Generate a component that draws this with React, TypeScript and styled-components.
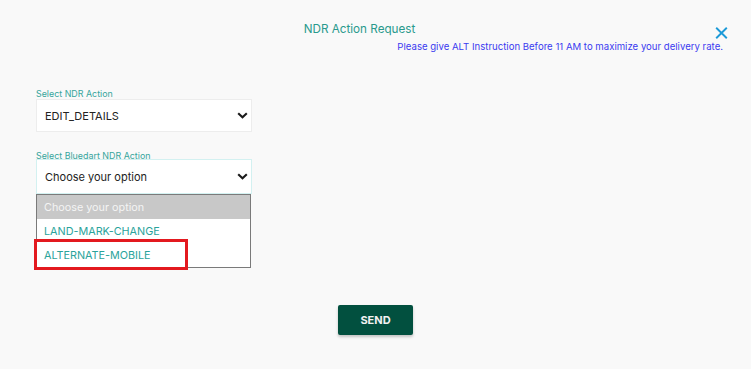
import React from "react";
import styled, { createGlobalStyle } from "styled-components";

const Global = createGlobalStyle`
  html, body { margin: 0; padding: 0; background: #f9f9f9; }
  body { font-family: Inter, "Noto Sans", Arial, sans-serif; }
  * { box-sizing: border-box; }
`;

const Page = styled.div`
  width: 751px;
  height: 369px;
  background: #f9f9f9;
  padding: 21px 23px 0 36px;
  display: flex;
  flex-direction: column;
`;

const TopRow = styled.div`
  display: flex;
  align-items: flex-start;
  height: 17px;
`;

const Title = styled.div`
  flex: 1;
  text-align: center;
  padding-right: 32px;
  padding-top: 1px;
  font-size: 11.7px;
  line-height: 14px;
  color: #2a9a8d;
`;

const Close = styled.button`
  border: 0;
  background: none;
  padding: 0;
  margin-top: 6px;
  width: 13px;
  height: 12px;
  display: flex;
  cursor: pointer;
`;

const Notice = styled.div`
  text-align: right;
  font-size: 9.6px;
  line-height: 12px;
  color: #3b3bf0;
  padding-right: 5px;
  margin-top: 3px;
`;

const Form = styled.div`
  width: 216px;
  margin-top: 35px;
  display: flex;
  flex-direction: column;
`;

const Label = styled.div<{ $top?: number; $bottom?: number }>`
  font-size: 8.9px;
  line-height: 11px;
  color: #36a59c;
  margin-top: ${(p) => p.$top ?? 0}px;
  margin-bottom: ${(p) => p.$bottom ?? 0}px;
`;

const SelectBox = styled.div<{ $focus?: boolean; $h: number }>`
  height: ${(p) => p.$h}px;
  background: #fff;
  border: 1px solid ${(p) => (p.$focus ? "#d3f1f1" : "#ededed")};
  display: flex;
  align-items: center;
  justify-content: space-between;
  padding: 0 3px 0 8px;
  font-size: 11px;
  color: #222;
`;

const ListBox = styled.div`
  width: 215px;
  border: 1px solid #7a7a7a;
  background: #fff;
  display: flex;
  flex-direction: column;
`;

const Option = styled.div<{ $placeholder?: boolean }>`
  position: relative;
  height: 24px;
  display: flex;
  align-items: center;
  padding-left: 7px;
  font-size: 10.8px;
  background: ${(p) => (p.$placeholder ? "#c8c8c8" : "#fff")};
  color: ${(p) => (p.$placeholder ? "#f4f4f4" : "#2aa39b")};
`;

const Highlight = styled.div`
  position: absolute;
  left: -3px;
  top: -4px;
  width: 154px;
  height: 31px;
  border: 3px solid #e3191f;
  pointer-events: none;
`;

const ButtonRow = styled.div`
  display: flex;
  justify-content: center;
  margin: 37px -23px 0 -36px;
`;

const SendButton = styled.button`
  width: 75px;
  height: 30px;
  background: #02503f;
  color: #f2f2f2;
  border: 0;
  border-radius: 2px;
  font-family: Inter, "Noto Sans", Arial, sans-serif;
  font-weight: 700;
  font-size: 11px;
  box-shadow: 0 2px 3px rgba(0, 0, 0, 0.22);
  cursor: pointer;
`;

const Chevron = () => (
  <svg width="11" height="7" viewBox="0 0 11 7">
    <path d="M1.2 1.2 L5.5 5.3 L9.8 1.2" fill="none" stroke="#1a1a1a" strokeWidth="2.1" />
  </svg>
);

export default function App() {
  return (
    <>
      <Global />
      <Page>
        <TopRow>
          <Title>NDR Action Request</Title>
          <Close aria-label="close">
            <svg width="13" height="12" viewBox="0 0 13 12">
              <path d="M1.2 0.8 L11.8 11.2 M11.8 0.8 L1.2 11.2" stroke="#1c9ad8" strokeWidth="1.9" />
            </svg>
          </Close>
        </TopRow>
        <Notice>Please give ALT Instruction Before 11 AM to maximize your delivery rate.</Notice>
        <Form>
          <Label>Select NDR Action</Label>
          <SelectBox $h={33}>
            <span>EDIT_DETAILS</span>
            <Chevron />
          </SelectBox>
          <Label $top={18} $bottom={-2}>Select Bluedart NDR Action</Label>
          <SelectBox $focus $h={35}>
            <span>Choose your option</span>
            <Chevron />
          </SelectBox>
          <ListBox>
            <Option $placeholder>Choose your option</Option>
            <Option>LAND-MARK-CHANGE</Option>
            <Option>
              ALTERNATE-MOBILE
              <Highlight />
            </Option>
          </ListBox>
        </Form>
        <ButtonRow>
          <SendButton>SEND</SendButton>
        </ButtonRow>
      </Page>
    </>
  );
}
